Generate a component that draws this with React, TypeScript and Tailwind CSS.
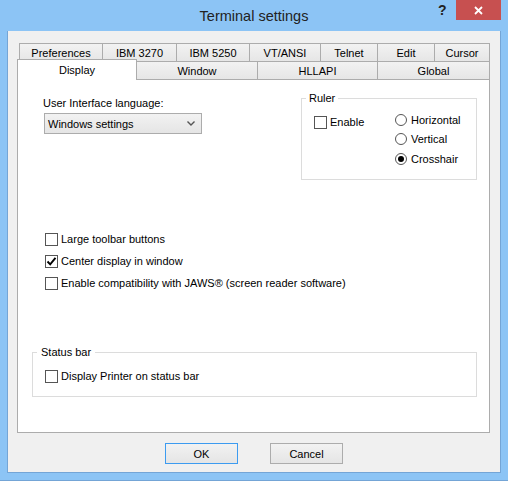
import React from "react";

const rowOneTabs = [
  { label: "Preferences", w: "w-[83px]" },
  { label: "IBM 3270", w: "w-[74px]" },
  { label: "IBM 5250", w: "w-[73px]" },
  { label: "VT/ANSI", w: "w-[71px]" },
  { label: "Telnet", w: "w-[57px]" },
  { label: "Edit", w: "w-[57px]" },
  { label: "Cursor", w: "w-[56px]" },
];

function CheckBox({ checked = false, label }: { checked?: boolean; label: string }) {
  return (
    <div className="flex items-center gap-[3px] h-[22px]">
      <div className="w-[13px] h-[13px] border border-[#555] bg-white flex items-center justify-center">
        {checked && (
          <svg width="11" height="11" viewBox="0 0 11 11">
            <path d="M1.5 5.5 L4.2 8.4 L9.5 1.8" fill="none" stroke="#000" strokeWidth="1.9" />
          </svg>
        )}
      </div>
      <span>{label}</span>
    </div>
  );
}

function Radio({ checked = false, label }: { checked?: boolean; label: string }) {
  return (
    <div className="flex items-center gap-[4px] h-[19.5px]">
      <div className="w-[12px] h-[12px] rounded-full border border-[#555] bg-white flex items-center justify-center">
        {checked && <div className="w-[6px] h-[6px] rounded-full bg-black" />}
      </div>
      <span>{label}</span>
    </div>
  );
}

export default function App() {
  return (
    <div className="w-[508px] h-[481px] bg-[#8cc4f5] flex flex-col font-['Liberation_Sans',Arial,sans-serif] text-[11px] leading-[14px] text-black">
      {/* Title bar */}
      <div className="relative h-[31px] flex items-center justify-center">
        <span className="text-[14.5px] text-[#222]">Terminal settings</span>
        <span className="absolute left-[438px] top-[3px] text-[14px] font-bold text-[#222]">?</span>
        <div className="absolute left-[456px] top-0 w-[45px] h-[20px] bg-[#c75050] flex items-center justify-center">
          <svg width="9" height="9" viewBox="0 0 9 9">
            <path d="M1 1 L8 8 M8 1 L1 8" stroke="#fff" strokeWidth="1.8" />
          </svg>
        </div>
      </div>

      {/* Client */}
      <div className="mx-[7px] h-[442px] bg-[#f0f0f0] border-x border-b border-[#74a5d6] flex flex-col">
        <div className="mt-[12px] ml-[11px] flex h-[18px]">
          {rowOneTabs.map((t, i) => (
            <div
              key={t.label}
              className={`${t.w} h-[18px] border-t border-l border-[#acacac] bg-gradient-to-b from-[#f2f2f2] to-[#e6e6e6] flex items-center justify-center ${
                i === rowOneTabs.length - 1 ? "border-r" : ""
              }`}
            >
              {t.label}
            </div>
          ))}
        </div>

        <div className="ml-[9px] flex h-[18px] relative z-10">
          <div className="w-[120px] h-[21px] -mt-[2px] bg-white border-t border-x border-[#acacac] flex items-center justify-center">
            Display
          </div>
          <div className="w-[121px] h-[18px] border-t border-r border-[#acacac] bg-gradient-to-b from-[#f2f2f2] to-[#e6e6e6] flex items-center justify-center">
            Window
          </div>
          <div className="w-[120px] h-[18px] border-t border-r border-[#acacac] bg-gradient-to-b from-[#f2f2f2] to-[#e6e6e6] flex items-center justify-center">
            HLLAPI
          </div>
          <div className="w-[112px] h-[18px] border-t border-r border-[#acacac] bg-gradient-to-b from-[#f2f2f2] to-[#e6e6e6] flex items-center justify-center">
            Global
          </div>
        </div>

        {/* Panel */}
        <div className="ml-[9px] w-[473px] h-[354px] bg-white border border-[#acacac] flex flex-col">
          <div className="flex items-start">
            <div className="pl-[25px] pt-[16px] flex flex-col">
              <span>User Interface language:</span>
              <div className="mt-[3px] ml-[1px] w-[158px] h-[21px] border border-[#acacac] bg-gradient-to-b from-[#f2f2f2] to-[#e5e5e5] flex items-center justify-between pl-[3px] pr-[6px]">
                <span>Windows settings</span>
                <svg width="8" height="5" viewBox="0 0 8 5">
                  <path d="M0.5 0.5 L4 4 L7.5 0.5" fill="none" stroke="#555" strokeWidth="1.4" />
                </svg>
              </div>
            </div>

            <div className="relative ml-auto mr-[12px] mt-[18px] w-[176px] h-[82px] border border-[#dcdcdc] flex pl-[12px] pt-[11px]">
              <span className="absolute left-[4px] -top-[8px] bg-white px-[3px]">Ruler</span>
              <div className="mt-[1px] w-[81px]">
                <CheckBox label="Enable" />
              </div>
              <div className="flex flex-col">
                <Radio label="Horizontal" />
                <Radio label="Vertical" />
                <Radio checked label="Crosshair" />
              </div>
            </div>
          </div>

          <div className="mt-[48px] pl-[27px] flex flex-col">
            <CheckBox label="Large toolbar buttons" />
            <CheckBox checked label="Center display in window" />
            <CheckBox label="Enable compatibility with JAWS® (screen reader software)" />
          </div>

          <div className="relative mt-[58px] ml-[14px] w-[445px] h-[45px] border border-[#dcdcdc] pl-[12px] pt-[12px]">
            <span className="absolute left-[4px] -top-[8px] bg-white px-[4px]">Status bar</span>
            <CheckBox label="Display Printer on status bar" />
          </div>
        </div>

        {/* Buttons */}
        <div className="mt-[10px] flex justify-center gap-[32px]">
          <button className="w-[73px] h-[21px] border border-[#3c9bf0] bg-gradient-to-b from-[#f2f2f2] to-[#e5e5e5] flex items-center justify-center">
            OK
          </button>
          <button className="w-[73px] h-[21px] border border-[#acacac] bg-gradient-to-b from-[#f2f2f2] to-[#e5e5e5] flex items-center justify-center">
            Cancel
          </button>
        </div>
      </div>

      <div className="flex-1 border-b border-[#74a5d6]" />
    </div>
  );
}
